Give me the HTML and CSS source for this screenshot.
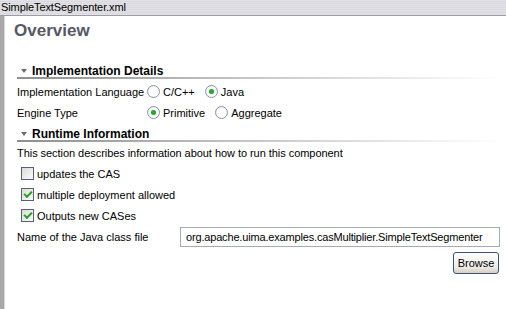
FILE: index.html
```html
<!DOCTYPE html>
<html lang="en">

<head>
  <meta charset="UTF-8">
  <title>SimpleTextSegmenter.xml</title>
  <link rel="stylesheet" href="styles.css">
</head>

<body>
  <div class="tab-bar">
    <span class="tab-title">SimpleTextSegmenter.xml</span>
  </div>

  <div class="editor">
    <h1 class="page-title">Overview</h1>

    <div class="section-header">
      <span class="twisty"></span>
      <span>Implementation Details</span>
    </div>
    <div class="form-grid">
      <span class="label">Implementation Language</span>
      <div class="radio-group">
        <label class="radio"><span class="radio-dot"></span>C/C++</label>
        <label class="radio checked"><span class="radio-dot"></span>Java</label>
      </div>
      <span class="label">Engine Type</span>
      <div class="radio-group">
        <label class="radio checked"><span class="radio-dot"></span>Primitive</label>
        <label class="radio"><span class="radio-dot"></span>Aggregate</label>
      </div>
    </div>

    <div class="section-header second">
      <span class="twisty"></span>
      <span>Runtime Information</span>
    </div>
    <p class="description">This section describes information about how to run this component</p>
    <label class="check"><span class="check-box"></span>updates the CAS</label>
    <label class="check checked"><span class="check-box"></span>multiple deployment allowed</label>
    <label class="check checked"><span class="check-box"></span>Outputs new CASes</label>

    <div class="class-row">
      <span class="label">Name of the Java class file</span>
      <div class="text-field">org.apache.uima.examples.casMultiplier.SimpleTextSegmenter</div>
    </div>
    <div class="button-row">
      <button class="browse">Browse</button>
    </div>
  </div>
</body>

</html>
```

FILE: styles.css
```css
* {
  margin: 0;
  padding: 0;
  box-sizing: border-box;
}

body {
  font-family: 'Liberation Sans', Arial, sans-serif;
  font-size: 11px;
  color: #000;
  background: #fff;
  width: 506px;
  height: 309px;
  overflow: hidden;
}

.tab-bar {
  height: 16px;
  background: repeating-linear-gradient(#e2e2e6 0, #e2e2e6 1px, #dadade 1px, #dadade 2px);
  border-bottom: 1px solid #9c9ca4;
  padding-left: 1px;
  line-height: 15px;
  letter-spacing: -0.1px;
}

.editor {
  height: 293px;
  border-left: 4px solid #a8a8a8;
  box-shadow: inset 1px 0 0 #d8d8d8;
  padding: 0 6px 0 13px;
}

.page-title {
  height: 45px;
  padding-top: 5px;
  margin-left: -3px;
  font-size: 17px;
  font-weight: bold;
  color: #575863;
}

.section-header {
  position: relative;
  display: flex;
  align-items: center;
  gap: 5px;
  height: 19px;
  padding-left: 4px;
  font-size: 12px;
  font-weight: bold;
}

.section-header.second {
  margin-top: 1px;
}

.section-header::after {
  content: '';
  position: absolute;
  left: 0;
  right: 0;
  bottom: 1px;
  height: 2px;
  background: linear-gradient(to right, #8e8e8e, #c8c8c8 50%, #fff);
}

.twisty {
  width: 0;
  height: 0;
  border-left: 3.5px solid transparent;
  border-right: 3.5px solid transparent;
  border-top: 4px solid #6c6c70;
}

.label {
  white-space: nowrap;
}

.form-grid {
  display: grid;
  grid-template-columns: 130px auto;
  grid-auto-rows: 21px;
  align-items: center;
  margin-top: 1px;
}

.radio-group {
  display: flex;
  gap: 10px;
}

.radio {
  display: flex;
  align-items: center;
  gap: 3px;
}

.radio-dot {
  width: 13px;
  height: 13px;
  border-radius: 50%;
  border: 1px solid #8a94a8;
  background: radial-gradient(circle at 60% 60%, #fff 40%, #e4e4ea);
  display: flex;
  align-items: center;
  justify-content: center;
}

.radio.checked .radio-dot::after {
  content: '';
  width: 5px;
  height: 5px;
  border-radius: 50%;
  background: #2fa52f;
  box-shadow: 0 0 1px #7ed07e;
}

.description {
  height: 20px;
  line-height: 20px;
  letter-spacing: -0.05px;
}

.check {
  display: flex;
  align-items: center;
  gap: 3px;
  height: 21px;
  padding-left: 4px;
}

.check-box {
  width: 13px;
  height: 13px;
  border: 1px solid #54607c;
  background: linear-gradient(135deg, #dcdcd6, #fafafa);
  display: flex;
  align-items: center;
  justify-content: center;
}

.check.checked .check-box::after {
  content: '';
  width: 6px;
  height: 3px;
  border-left: 2px solid #21a121;
  border-bottom: 2px solid #21a121;
  transform: translateY(-1px) rotate(-45deg);
}

.class-row {
  display: grid;
  grid-template-columns: 163px 1fr;
  align-items: center;
  margin-top: 1px;
}

.text-field {
  height: 20px;
  line-height: 18px;
  border: 1px solid #a5acb5;
  padding-left: 5px;
  white-space: nowrap;
  letter-spacing: -0.17px;
}

.button-row {
  display: flex;
  justify-content: flex-end;
  margin-top: 5px;
  padding-right: 1px;
}

.browse {
  font-family: inherit;
  font-size: 11px;
  width: 46px;
  height: 22px;
  border: 1px solid #3d4f72;
  border-radius: 3px;
  background: linear-gradient(#fff, #ecebe6 70%, #d6d0c5);
  color: #000;
}
```
